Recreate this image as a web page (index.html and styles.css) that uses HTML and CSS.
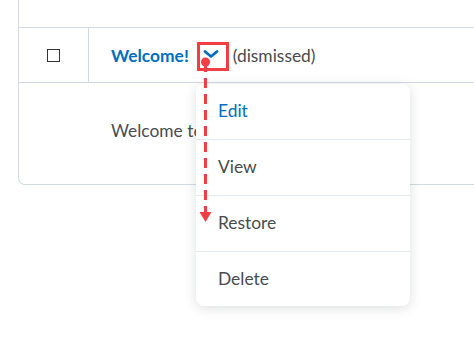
FILE: index.html
```html
<!DOCTYPE html>
<html>
<head>
<meta charset="utf-8">
<link rel="stylesheet" href="styles.css">
</head>
<body>
<div class="page">
  <div class="table">
    <div class="row-top"></div>
    <div class="row">
      <div class="cell-check"><span class="checkbox"></span></div>
      <div class="cell-title">
        <a class="title">Welcome!</a>
        <span class="chev">
          <svg width="16" height="10" viewBox="0 0 16 10"><path d="M2 2.5 L8 7.5 L14 2.5" fill="none" stroke="#006fbf" stroke-width="2.8" stroke-linecap="round" stroke-linejoin="round"/></svg>
        </span>
        <span class="status">(dismissed)</span>
      </div>
    </div>
    <div class="row-body">Welcome to the course</div>
  </div>

  <ul class="menu">
    <li class="item item-primary">Edit</li>
    <li class="item">View</li>
    <li class="item">Restore</li>
    <li class="item">Delete</li>
  </ul>

  <div class="callout"></div>
  <svg class="arrow" width="474" height="340" viewBox="0 0 474 340">
    <line x1="205.5" y1="62" x2="205.5" y2="213" stroke="#f03e45" stroke-width="3" stroke-dasharray="10 6"/>
    <circle cx="205.5" cy="62" r="4.5" fill="#f03e45"/>
    <polygon points="199.5,212 211.5,212 205.5,222" fill="#f03e45"/>
  </svg>
</div>
</body>
</html>
```
FILE: styles.css
```css
html, body {
  margin: 0;
  padding: 0;
  background: #ffffff;
  overflow: hidden;
}
body {
  width: 474px;
  height: 340px;
  font-family: Lato, "Open Sans", sans-serif;
  color: #494c4e;
}
.page {
  position: relative;
  width: 474px;
  height: 340px;
  overflow: hidden;
}
.table {
  margin-left: 18px;
  width: 455px;
  border-left: 1px solid #d3d9e3;
  border-bottom: 1px solid #d3d9e3;
  border-bottom-left-radius: 7px;
}
.row-top {
  height: 27px;
  border-bottom: 1px solid #d3d9e3;
}
.row {
  display: flex;
  height: 54px;
  border-bottom: 1px solid #d3d9e3;
}
.cell-check {
  width: 69px;
  flex: none;
  border-right: 1px solid #d3d9e3;
  display: flex;
  align-items: center;
  justify-content: center;
}
.checkbox {
  display: block;
  width: 11px;
  height: 11px;
  border: 1.5px solid #333333;
  margin-top: 1px;
}
.cell-title {
  display: flex;
  align-items: center;
  padding-left: 22px;
  font-size: 17.4px;
  white-space: nowrap;
}
.title {
  color: #006fbf;
  font-weight: 700;
}
.chev {
  display: flex;
  align-items: center;
  margin-left: 14px;
  margin-top: -3px;
}
.status {
  margin-left: 14px;
  color: #494c4e;
}
.row-body {
  height: 101px;
  box-sizing: border-box;
  padding-left: 92px;
  padding-top: 37px;
  font-size: 17.4px;
  white-space: nowrap;
}
.menu {
  position: absolute;
  left: 196px;
  top: 84px;
  width: 214px;
  margin: 0;
  padding: 0;
  list-style: none;
  background: #ffffff;
  border-radius: 8px;
  box-shadow: 0 2px 12px rgba(86, 90, 92, 0.2);
}
.item {
  height: 56px;
  display: flex;
  align-items: center;
  padding-left: 22px;
  padding-bottom: 2px;
  box-sizing: border-box;
  font-size: 17.4px;
  color: #494c4e;
  border-bottom: 1px solid #e3e9f1;
}
.item:last-child {
  border-bottom: none;
  height: 54px;
}
.item-primary {
  color: #006fbf;
}
.callout {
  position: absolute;
  left: 197px;
  top: 42px;
  width: 26px;
  height: 23px;
  border: 3px solid #f03e45;
}
.arrow {
  position: absolute;
  left: 0;
  top: 0;
  pointer-events: none;
}
```
